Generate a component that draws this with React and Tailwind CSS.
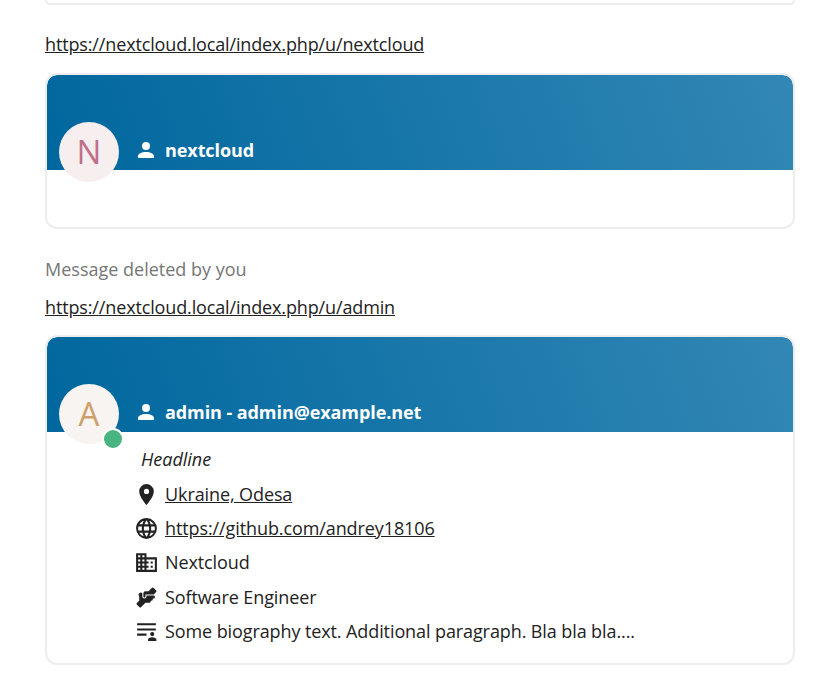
const ICONS = {
  account: 'M12,4A4,4 0 0,1 16,8A4,4 0 0,1 12,12A4,4 0 0,1 8,8A4,4 0 0,1 12,4M12,14C16.42,14 20,15.79 20,18V20H4V18C4,15.79 7.58,14 12,14Z',
  marker: 'M12,11.5A2.5,2.5 0 0,1 9.5,9A2.5,2.5 0 0,1 12,6.5A2.5,2.5 0 0,1 14.5,9A2.5,2.5 0 0,1 12,11.5M12,2A7,7 0 0,0 5,9C5,14.25 12,22 12,22C12,22 19,14.25 19,9A7,7 0 0,0 12,2Z',
  web: 'M16.36,14C16.44,13.34 16.5,12.68 16.5,12C16.5,11.32 16.44,10.66 16.36,10H19.74C19.9,10.64 20,11.31 20,12C20,12.69 19.9,13.36 19.74,14M14.59,19.56C15.19,18.45 15.65,17.25 15.97,16H18.92C17.96,17.65 16.43,18.93 14.59,19.56M14.34,14H9.66C9.56,13.34 9.5,12.68 9.5,12C9.5,11.32 9.56,10.65 9.66,10H14.34C14.43,10.65 14.5,11.32 14.5,12C14.5,12.68 14.43,13.34 14.34,14M12,19.96C11.17,18.76 10.5,17.43 10.09,16H13.91C13.5,17.43 12.83,18.76 12,19.96M8,8H5.08C6.03,6.34 7.57,5.06 9.4,4.44C8.8,5.55 8.35,6.75 8,8M5.08,16H8C8.35,17.25 8.8,18.45 9.4,19.56C7.57,18.93 6.03,17.65 5.08,16M4.26,14C4.1,13.36 4,12.69 4,12C4,11.31 4.1,10.64 4.26,10H7.64C7.56,10.66 7.5,11.32 7.5,12C7.5,12.68 7.56,13.34 7.64,14M12,4.03C12.83,5.23 13.5,6.57 13.91,8H10.09C10.5,6.57 11.17,5.23 12,4.03M18.92,8H15.97C15.65,6.75 15.19,5.55 14.59,4.44C16.43,5.07 17.96,6.34 18.92,8M12,2C6.47,2 2,6.5 2,12A10,10 0 0,0 12,22A10,10 0 0,0 22,12A10,10 0 0,0 12,2Z',
  domain: 'M18,15H16V17H18M18,11H16V13H18M20,19H12V17H14V15H12V13H14V11H12V9H20M10,7H8V5H10M10,11H8V9H10M10,15H8V13H10M10,19H8V17H10M6,7H4V5H6M6,11H4V9H6M6,15H4V13H6M6,19H4V17H6M12,7V3H2V21H22V7H12Z',
  handshake: 'M11 6H14L17.29 2.7A1 1 0 0 1 18.71 2.7L21.29 5.29A1 1 0 0 1 21.29 6.7L19 9H11V11A1 1 0 0 1 10 12A1 1 0 0 1 9 11V8A2 2 0 0 1 11 6M5 11V15L2.71 17.29A1 1 0 0 0 2.71 18.7L5.29 21.29A1 1 0 0 0 6.71 21.29L11 17H15A1 1 0 0 0 16 16V15H17A1 1 0 0 0 18 14V13H19A1 1 0 0 0 20 12V11A1 1 0 0 0 19 10H12V11A2 2 0 0 1 10 13H10A2 2 0 0 1 8 11V8A2 2 0 0 0 5 11Z',
  bio: 'M3 4H21V6H3ZM3 9H21V11H3ZM3 14H12V16H3ZM17.5 12.5A2 2 0 0 1 19.5 14.5A2 2 0 0 1 17.5 16.5A2 2 0 0 1 15.5 14.5A2 2 0 0 1 17.5 12.5M13.5 21V19.5C13.5 18.2 16.2 17.5 17.5 17.5C18.8 17.5 21.5 18.2 21.5 19.5V21Z',
};

function Icon({ name, className = 'w-6 h-6' }) {
  return (
    <svg viewBox="0 0 24 24" className={`${className} fill-current shrink-0`}>
      <path d={ICONS[name]} />
    </svg>
  );
}

function ProfileCard({ letter, letterColor, avatarBg, title, online, children }) {
  return (
    <div className="border-2 border-[#ededed] rounded-[12px] overflow-hidden">
      <div className="h-[95px] bg-[linear-gradient(70deg,#00679e_0%,#3287b5_100%)] flex items-end text-white rounded-t-[10px]">
        <div className={`relative w-[60px] h-[60px] rounded-full ml-3 -mb-3 z-10 flex items-center justify-center text-[33px] font-normal ${avatarBg} ${letterColor}`}>
          {letter}
          {online && <span className="absolute right-[-5px] bottom-[-6px] w-[22px] h-[22px] rounded-full bg-[#49b382] border-2 border-white" />}
        </div>
        <div className="flex items-center ml-[15px] mb-[8px] h-6">
          <Icon name="account" />
          <span className="ml-[7px] text-[18px] font-bold leading-6 tracking-[-0.08px]">{title}</span>
        </div>
      </div>
      <div className="pl-[87px]">{children}</div>
    </div>
  );
}

function Row({ icon, children }) {
  return (
    <div className="flex items-center h-[34.25px] gap-[6px]">
      <Icon name={icon} className="w-[25px] h-[25px]" />
      <span className="tracking-[-0.1px]">{children}</span>
    </div>
  );
}

export default function App() {
  return (
    <div className="h-[700px] overflow-hidden bg-white text-[#222] text-[18px] font-['Open_Sans','Noto_Sans',sans-serif] pl-[45px] pr-[35px]">
      <div className="h-[5px] border-2 border-t-0 border-[#ededed] rounded-b-[12px]" />

      <a className="block mt-[27px] h-6 leading-6 underline tracking-[-0.14px]">https://nextcloud.local/index.php/u/nextcloud</a>
      <div className="mt-[17px]">
        <ProfileCard letter="N" letterColor="text-[#c0718a]" avatarBg="bg-[#f7eef0]" title="nextcloud">
          <div className="h-[57px]" />
        </ProfileCard>
      </div>

      <p className="mt-[28px] h-6 leading-6 text-[#767676]">Message deleted by you</p>
      <a className="block mt-[14px] h-6 leading-6 underline tracking-[-0.14px]">https://nextcloud.local/index.php/u/admin</a>
      <div className="mt-[16px]">
        <ProfileCard letter="A" letterColor="text-[#cf9f6c]" avatarBg="bg-[#f8f4f1]" title="admin - admin@example.net" online>
          <div className="pt-[10.25px] pb-[14.75px]">
            <div className="h-[35px] flex items-center italic pl-[7px]">Headline</div>
            <Row icon="marker"><span className="underline">Ukraine, Odesa</span></Row>
            <Row icon="web"><span className="underline">https://github.com/andrey18106</span></Row>
            <Row icon="domain">Nextcloud</Row>
            <Row icon="handshake">Software Engineer</Row>
            <Row icon="bio">Some biography text. Additional paragraph. Bla bla bla....</Row>
          </div>
        </ProfileCard>
      </div>
    </div>
  );
}
